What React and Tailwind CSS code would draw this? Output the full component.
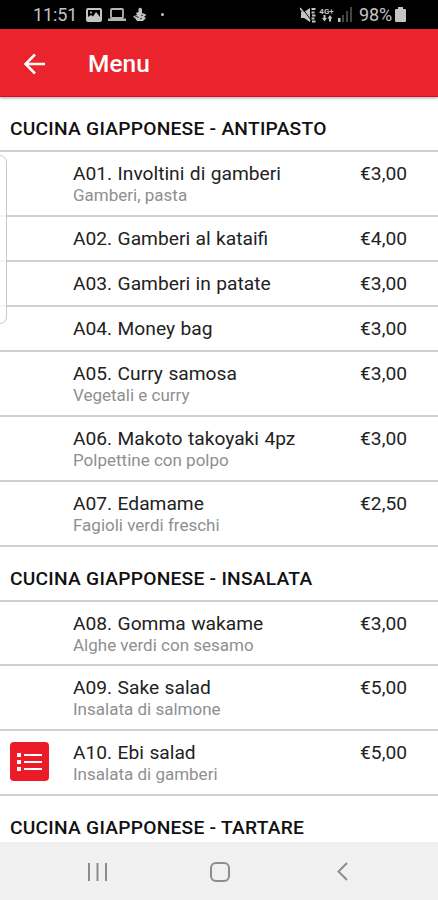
const sections = [
  {
    title: "CUCINA GIAPPONESE - ANTIPASTO",
    items: [
      { name: "A01. Involtini di gamberi", info: "Gamberi, pasta", price: "€3,00" },
      { name: "A02. Gamberi al kataifi", price: "€4,00" },
      { name: "A03. Gamberi in patate", price: "€3,00" },
      { name: "A04. Money bag", price: "€3,00" },
      { name: "A05. Curry samosa", info: "Vegetali e curry", price: "€3,00" },
      { name: "A06. Makoto takoyaki 4pz", info: "Polpettine con polpo", price: "€3,00" },
      { name: "A07. Edamame", info: "Fagioli verdi freschi", price: "€2,50" },
    ],
  },
  {
    title: "CUCINA GIAPPONESE - INSALATA",
    items: [
      { name: "A08. Gomma wakame", info: "Alghe verdi con sesamo", price: "€3,00" },
      { name: "A09. Sake salad", info: "Insalata di salmone", price: "€5,00" },
      { name: "A10. Ebi salad", info: "Insalata di gamberi", price: "€5,00" },
    ],
  },
  { title: "CUCINA GIAPPONESE - TARTARE", items: [] },
];

const StatusBar = () => (
  <div className="flex h-[29px] shrink-0 items-center bg-black pl-[33px] text-[18px] text-[#c4c4c4]">
    <span className="w-[53px] pt-px leading-[28px] tracking-[-0.1px]">11:51</span>
    {/* Notifiche */}
    <svg width="16" height="14" viewBox="0 0 16 14" className="shrink-0">
      <rect x="1" y="1" width="14" height="12" rx="1" fill="none" stroke="#c4c4c4" strokeWidth="2" />
      <path d="M2 9l3-2 2 1.500 3-4.500 4 5v3H2z" fill="#c4c4c4" />
      <circle cx="5" cy="4.500" r="1" fill="#c4c4c4" />
    </svg>
    <svg width="18" height="14" viewBox="0 0 18 14" className="ml-[6px] shrink-0">
      <rect x="3" y="1" width="12" height="9" rx="1" fill="none" stroke="#b5b5b5" strokeWidth="1.800" />
      <path d="M0 10.500h18v2.500H0z" fill="#b5b5b5" />
    </svg>
    <svg width="14" height="15" viewBox="0 0 14 15" className="ml-[7px] shrink-0" fill="#c4c4c4">
      <path d="M5.500 2q1-2 2.500-1t1 2v3l3 1q2 1 0 2l-1 1 2 1-3 3H4L2 11l-2-1 1-1 3-1-1-2 2.500-1z" />
      <path d="M2 9l4 1.500M8 8l2 .5M7 12l2-1" stroke="#333" fill="none" />
    </svg>
    <span className="ml-[14px] h-[3px] w-[3px] rounded-full bg-[#c4c4c4]" />
    {/* Rete e batteria */}
    <svg width="16" height="16" viewBox="0 0 16 16" className="ml-[136px] shrink-0" fill="#c4c4c4">
      <path d="M1 5h3l6-4v14l-6-4H1z" />
      <path d="M2 1l9 12" stroke="#000" strokeWidth="1" />
      <path d="M0 1l10 13" stroke="#c4c4c4" strokeWidth="1.500" />
      <path d="M11.500 2h4M11.500 5.500h3M12 8.500h3.500M11.500 11.500h3M12 14.500h3.500" stroke="#c4c4c4" strokeWidth="2" />
    </svg>
    <div className="ml-[3px] w-[15px] shrink-0">
      <div className="text-center text-[8px] leading-[7px] font-bold">4G+</div>
      <svg width="15" height="7" viewBox="0 0 15 7" fill="#c4c4c4">
        <path d="M4.500 0h2v3H8L5.500 6.500 3 3h1.500zM10 6.500h2v-3h1.500L11 0 8.500 3.500H10z" />
      </svg>
    </div>
    <svg width="15" height="15" viewBox="0 0 15 15" className="ml-[4px] shrink-0">
      <path d="M0 11h2.500v4H0z" fill="#c4c4c4" />
      <path d="M4 8h2v7H4zM8 4h2v11H8zM12 0h2v15h-2z" fill="#444" />
    </svg>
    <span className="ml-[6px] w-[36px] pt-px leading-[28px] tracking-[-0.1px]">98%</span>
    <svg width="11" height="15" viewBox="0 0 11 15" className="shrink-0" fill="#c4c4c4">
      <path d="M3 0h5v2h2q1 0 1 1v11q0 1-1 1H1q-1 0-1-1V3q0-1 1-1h2z" />
    </svg>
  </div>
);

const Header = () => (
  <header className="z-10 flex h-[68px] shrink-0 items-center border-b border-[#d81018] bg-[#eb232d] pt-[2px] pl-[23px] text-white shadow-[0_1px_3px_rgba(0,0,0,0.35)]">
    <svg width="23" height="22" viewBox="0 0 23 22" fill="none" stroke="white" strokeWidth="2.500">
      <path d="M22 11H2.500M12 1.500L2.500 11l9.500 9.500" />
    </svg>
    <h1 className="ml-[42px] pt-px text-[24.4px] leading-[30px] font-medium tracking-[0.1px]">Menu</h1>
  </header>
);

const SectionTitle = ({ title }) => (
  <h2 className="h-[55px] shrink-0 border-b-2 border-[#cfcfcf] pt-[20px] pl-[10px] text-[19.2px] leading-[24px] font-medium tracking-[0.25px] text-[#111]">
    {title}
  </h2>
);

const MenuItem = ({ item }) => (
  <div className={`${item.info ? "h-[64.9px]" : "h-[45px]"} flex shrink-0 justify-between border-b-2 border-[#cfcfcf] pt-[10px] pr-[31px] pl-[73px] text-[#222]`}>
    <div>
      <p className="text-[19.2px] leading-[23px] [word-spacing:0.7px]">{item.name}</p>
      {item.info && <p className="text-[17px] leading-[20px] text-[#8f8f8f]">{item.info}</p>}
    </div>
    <span className="text-[19.2px] leading-[23px]">{item.price}</span>
  </div>
);

const NavBar = () => (
  <nav className="z-10 flex h-[58px] shrink-0 items-center bg-[#f0f0f0] pt-px pl-[88px]">
    <svg width="19" height="18" viewBox="0 0 19 18" stroke="#8c8c8c" strokeWidth="2">
      <path d="M1 0v18M9.500 0v18M18 0v18" />
    </svg>
    <svg width="20" height="20" viewBox="0 0 20 20" className="ml-[103px]" fill="none" stroke="#8c8c8c" strokeWidth="2">
      <rect x="1" y="1" width="18" height="18" rx="5" />
    </svg>
    <svg width="11" height="19" viewBox="0 0 11 19" className="ml-[107px]" fill="none" stroke="#8c8c8c" strokeWidth="2">
      <path d="M10 1L1.500 9.500 10 18" />
    </svg>
  </nav>
);

const App = () => {
  return (
    <div className="relative flex h-[900px] w-[438px] flex-col overflow-hidden bg-white font-['Roboto',sans-serif]">
      <StatusBar />
      <Header />
      <main className="flex min-h-0 flex-1 flex-col overflow-hidden">
        {sections.map((section) => (
          <section key={section.title} className="shrink-0">
            <SectionTitle title={section.title} />
            {section.items.map((item) => (
              <MenuItem key={item.name} item={item} />
            ))}
          </section>
        ))}
      </main>
      <NavBar />

      {/* Maniglia del pannello laterale */}
      <div className="absolute top-[155px] -left-[10px] h-[169px] w-[17px] rounded-[7px] border border-[#c9c9c9] bg-white/80" />

      {/* Pulsante categorie */}
      <button className="absolute top-[742px] left-[10px] flex h-[39px] w-[39px] items-center justify-center rounded-[4px] bg-[#eb1c28]">
        <svg width="25" height="18" viewBox="0 0 25 18" fill="white">
          <path d="M0 0h4v4H0zM0 7h4v4H0zM0 14h4v4H0zM7 1h18v2H7zM7 8h18v2H7zM7 15h18v2H7z" />
        </svg>
      </button>
    </div>
  );
};

export default App;
